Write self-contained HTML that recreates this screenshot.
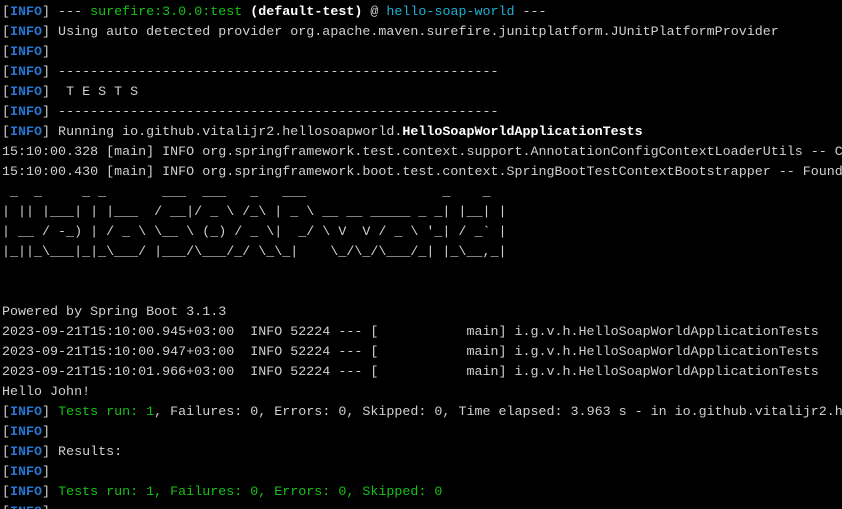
<!DOCTYPE html>
<html><head><style>
html,body{margin:0;padding:0;background:#000;width:842px;height:509px;overflow:hidden}
pre{margin:0;padding:3px 0 0 2px;font-family:"Liberation Mono",monospace;font-size:13.35px;line-height:20px;color:#d0d0d0;white-space:pre;overflow:hidden;width:840px}
.b{color:#2477d0;font-weight:bold}
.g{color:#16c216}
.c{color:#1eb0d0}
.w{color:#fff;font-weight:bold}
</style></head><body><pre>[<span class="b">INFO</span>] --- <span class="g">surefire:3.0.0:test</span> <span class="w">(default-test)</span> @ <span class="c">hello-soap-world</span> ---
[<span class="b">INFO</span>] Using auto detected provider org.apache.maven.surefire.junitplatform.JUnitPlatformProvider
[<span class="b">INFO</span>]
[<span class="b">INFO</span>] -------------------------------------------------------
[<span class="b">INFO</span>]  T E S T S
[<span class="b">INFO</span>] -------------------------------------------------------
[<span class="b">INFO</span>] Running io.github.vitalijr2.hellosoapworld.<span class="w">HelloSoapWorldApplicationTests</span>
15:10:00.328 [main] INFO org.springframework.test.context.support.AnnotationConfigContextLoaderUtils -- Could
15:10:00.430 [main] INFO org.springframework.boot.test.context.SpringBootTestContextBootstrapper -- Found
 _  _     _ _       ___  ___   _   ___                 _    _ 
| || |___| | |___  / __|/ _ \ /_\ | _ \ __ __ _____ _ _| |__| |
| __ / -_) | / _ \ \__ \ (_) / _ \|  _/ \ V  V / _ \ '_| / _` |
|_||_\___|_|_\___/ |___/\___/_/ \_\_|    \_/\_/\___/_| |_\__,_|


Powered by Spring Boot 3.1.3
2023-09-21T15:10:00.945+03:00  INFO 52224 --- [           main] i.g.v.h.HelloSoapWorldApplicationTests
2023-09-21T15:10:00.947+03:00  INFO 52224 --- [           main] i.g.v.h.HelloSoapWorldApplicationTests
2023-09-21T15:10:01.966+03:00  INFO 52224 --- [           main] i.g.v.h.HelloSoapWorldApplicationTests
Hello John!
[<span class="b">INFO</span>] <span class="g">Tests run: 1</span>, Failures: 0, Errors: 0, Skipped: 0, Time elapsed: 3.963 s - in io.github.vitalijr2.hellosoapworld
[<span class="b">INFO</span>]
[<span class="b">INFO</span>] Results:
[<span class="b">INFO</span>]
[<span class="b">INFO</span>] <span class="g">Tests run: 1, Failures: 0, Errors: 0, Skipped: 0</span>
[<span class="b">INFO</span>]
</pre></body></html>
